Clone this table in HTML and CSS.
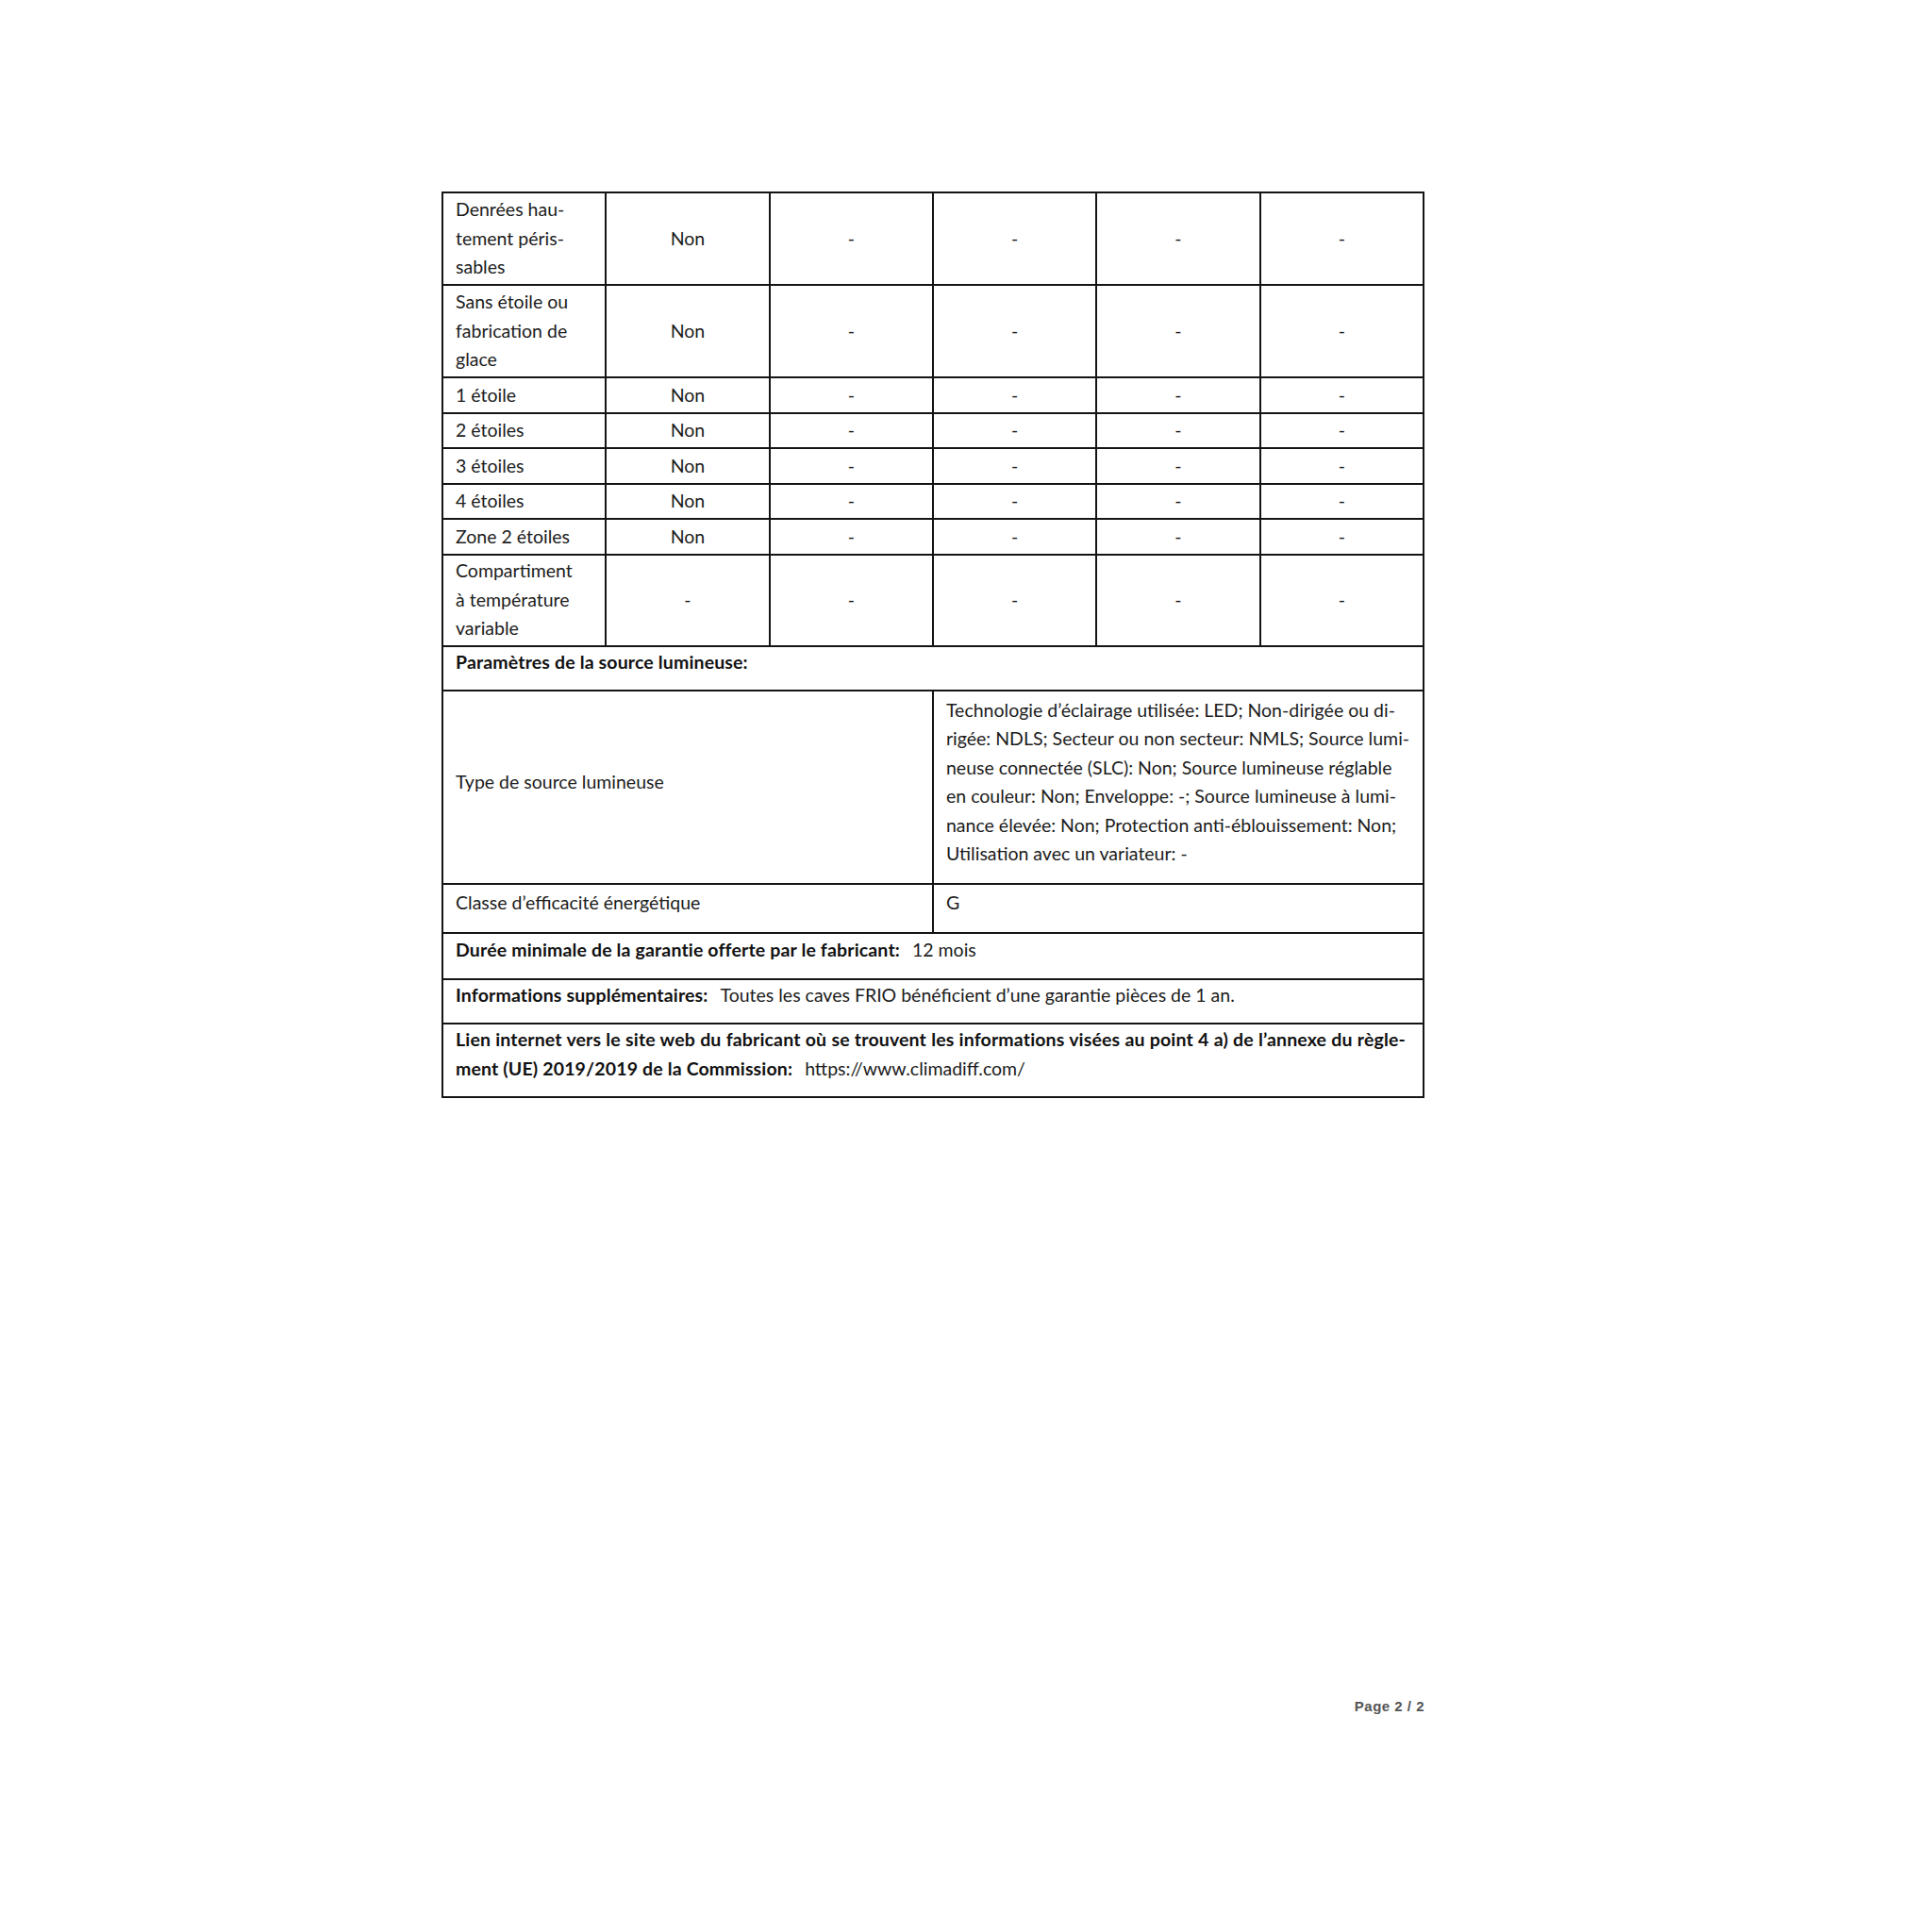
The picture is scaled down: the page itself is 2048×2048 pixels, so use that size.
FILE: index.html
```html
<!DOCTYPE html>
<html lang="fr">
<head>
<meta charset="utf-8">
<title>Fiche produit - page 2</title>
<link rel="stylesheet" href="styles.css">
</head>
<body>
<div class="page">
  <table class="sheet">
    <colgroup>
      <col class="c"><col class="c"><col class="c"><col class="c"><col class="c"><col class="c">
    </colgroup>
    <tr class="tall">
      <td class="lbl">Denrées hau-<br>tement péris-<br>sables</td>
      <td class="val">Non</td><td class="val">-</td><td class="val">-</td><td class="val">-</td><td class="val">-</td>
    </tr>
    <tr class="tall">
      <td class="lbl">Sans étoile ou<br>fabrication de<br>glace</td>
      <td class="val">Non</td><td class="val">-</td><td class="val">-</td><td class="val">-</td><td class="val">-</td>
    </tr>
    <tr class="short">
      <td class="lbl">1 étoile</td>
      <td class="val">Non</td><td class="val">-</td><td class="val">-</td><td class="val">-</td><td class="val">-</td>
    </tr>
    <tr class="short">
      <td class="lbl">2 étoiles</td>
      <td class="val">Non</td><td class="val">-</td><td class="val">-</td><td class="val">-</td><td class="val">-</td>
    </tr>
    <tr class="short">
      <td class="lbl">3 étoiles</td>
      <td class="val">Non</td><td class="val">-</td><td class="val">-</td><td class="val">-</td><td class="val">-</td>
    </tr>
    <tr class="short">
      <td class="lbl">4 étoiles</td>
      <td class="val">Non</td><td class="val">-</td><td class="val">-</td><td class="val">-</td><td class="val">-</td>
    </tr>
    <tr class="short">
      <td class="lbl">Zone 2 étoiles</td>
      <td class="val">Non</td><td class="val">-</td><td class="val">-</td><td class="val">-</td><td class="val">-</td>
    </tr>
    <tr class="tall comp">
      <td class="lbl">Compartiment<br>à température<br>variable</td>
      <td class="val">-</td><td class="val">-</td><td class="val">-</td><td class="val">-</td><td class="val">-</td>
    </tr>
    <tr class="head">
      <td class="full" colspan="6"><b>Paramètres de la source lumineuse:</b></td>
    </tr>
    <tr class="type">
      <td class="lbl half" colspan="3">Type de source lumineuse</td>
      <td class="lbl half desc" colspan="3">Technologie d’éclairage utilisée: LED; Non-dirigée ou di-<br>rigée: NDLS; Secteur ou non secteur: NMLS; Source lumi-<br>neuse connectée (SLC): Non; Source lumineuse réglable<br>en couleur: Non; Enveloppe: -; Source lumineuse à lumi-<br>nance élevée: Non; Protection anti-éblouissement: Non;<br>Utilisation avec un variateur: -</td>
    </tr>
    <tr class="classe">
      <td class="lbl half" colspan="3">Classe d’efficacité énergétique</td>
      <td class="lbl half" colspan="3">G</td>
    </tr>
    <tr class="head warranty">
      <td class="full" colspan="6"><b>Durée minimale de la garantie offerte par le fabricant:</b><span class="after">12 mois</span></td>
    </tr>
    <tr class="head">
      <td class="full" colspan="6"><b>Informations supplémentaires:</b><span class="after">Toutes les caves FRIO bénéficient d’une garantie pièces de 1 an.</span></td>
    </tr>
    <tr class="link">
      <td class="full" colspan="6"><b class="just">Lien internet vers le site web du fabricant où se trouvent les informations visées au point 4 a) de l’annexe du règle-</b><b>ment (UE) 2019/2019 de la Commission:</b><span class="after">https://www.climadiff.com/</span></td>
    </tr>
  </table>
  <div class="footer">Page 2 / 2</div>
</div>
</body>
</html>
```

FILE: styles.css
```css
html, body {
  margin: 0;
  padding: 0;
  background: #ffffff;
}

body {
  font-family: Lato, "Open Sans", "Liberation Sans", sans-serif;
  color: #1c1c1c;
}

.page {
  width: 1042px;
  margin-left: 468px;
  padding-top: 203px;
}

.sheet {
  width: 1042px;
  border-collapse: collapse;
  table-layout: fixed;
  font-size: 19.5px;
  line-height: 30.5px;
}

.sheet col.c {
  width: 173.3px;
}

.sheet td {
  border: 2px solid #141414;
  padding: 0 0 0 13px;
  vertical-align: middle;
  white-space: nowrap;
  overflow: hidden;
}

.sheet td.val {
  text-align: center;
  padding: 0;
}

.sheet tr.tall td { height: 96px; }
.sheet tr.comp td { height: 95px; }
.sheet tr.short td { height: 35.5px; }

.sheet tr.head td {
  height: 47px;
  padding-bottom: 11px;
  box-sizing: border-box;
}

.sheet tr.warranty td { height: 49px; }

.sheet tr.type td { height: 205px; padding-bottom: 10px; box-sizing: border-box; }
.sheet tr.classe td { height: 52px; padding-bottom: 10px; box-sizing: border-box; }

.sheet tr.link td {
  height: 78px;
  padding-bottom: 12px;
  box-sizing: border-box;
}

.sheet b {
  font-weight: 700;
  color: #111;
  letter-spacing: 0.15px;
}

.sheet b.just {
  display: block;
  width: 1007px;
  text-align: justify;
  text-align-last: justify;
}

.after {
  margin-left: 13px;
}

.footer {
  margin-top: 636px;
  text-align: right;
  font-family: "Liberation Sans", Arial, sans-serif;
  font-size: 15px;
  font-weight: 700;
  color: #555;
  letter-spacing: 0.5px;
}
```
